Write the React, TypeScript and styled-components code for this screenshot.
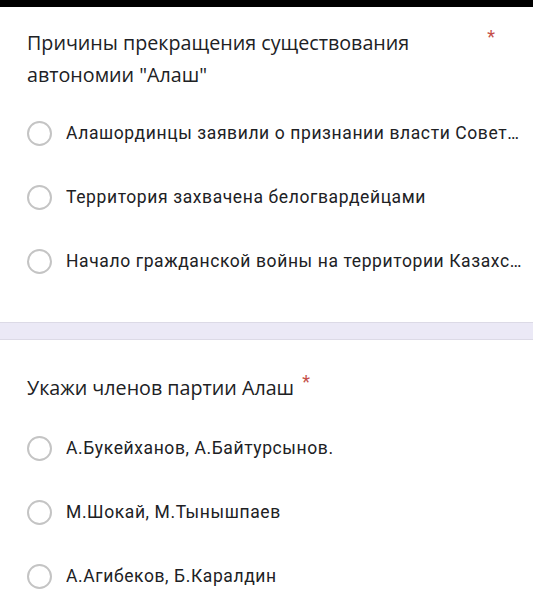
import styled, { createGlobalStyle } from 'styled-components';

const GlobalStyle = createGlobalStyle`
    html, body {
        margin: 0;
        padding: 0;
        background: #ffffff;
    }
`;

const Page = styled.div`
    width: 533px;
    height: 600px;
    overflow: hidden;
    background: #ffffff;
`;
const TopBar = styled.div`
    height: 7px;
    background: #000000;
`;
const Card = styled.div<{ top: number; bottom: number }>`
    padding: ${props => props.top}px 3px ${props => props.bottom}px 27px;
`;
const TitleRow = styled.div<{ spread: boolean }>`
    display: flex;
    align-items: flex-start;
    justify-content: ${props => (props.spread ? 'space-between' : 'flex-start')};
    padding-right: ${props => (props.spread ? '35px' : '0')};
    margin-bottom: ${props => (props.spread ? '10px' : '12px')};
`;
const Title = styled.div`
    font-family: 'Open Sans', 'Noto Sans', sans-serif;
    font-size: 19.7px;
    line-height: 32px;
    color: #202124;
    max-width: 420px;
`;
const Star = styled.span`
    font-family: 'Roboto', sans-serif;
    font-size: 18px;
    line-height: 24px;
    color: #c5504a;
    margin-left: 8px;
    margin-top: -2px;
`;
const Option = styled.label`
    display: flex;
    align-items: center;
    height: 64px;
    gap: 14px;
    min-width: 0;
`;
const Radio = styled.span`
    flex: none;
    width: 21px;
    height: 21px;
    border: 2.5px solid #c4c4c4;
    border-radius: 50%;
`;
const OptionText = styled.span`
    font-family: 'Roboto', sans-serif;
    font-size: 17.5px;
    letter-spacing: 0.6px;
    color: #202124;
    white-space: nowrap;
    overflow: hidden;
    text-overflow: ellipsis;
    min-width: 0;
`;
const Divider = styled.div`
    height: 16px;
    background: #ebe9f6;
    border-top: 1px solid #dcdae6;
    border-bottom: 1px solid #dcdae6;
`;

const questions = [
    {
        title: 'Причины прекращения существования автономии "Алаш"',
        spread: true,
        top: 20,
        bottom: 29,
        options: [
            'Алашординцы заявили о признании власти Совет…',
            'Территория захвачена белогвардейцами',
            'Начало гражданской войны на территории Казахс…',
        ],
    },
    {
        title: 'Укажи членов партии Алаш',
        spread: false,
        top: 32,
        bottom: 0,
        options: ['А.Букейханов, А.Байтурсынов.', 'М.Шокай, М.Тынышпаев', 'А.Агибеков, Б.Каралдин'],
    },
];

function App() {
    return (
        <Page>
            <GlobalStyle />
            <TopBar />
            {questions.map((q, i) => (
                <div key={q.title}>
                    {i > 0 && <Divider />}
                    <Card top={q.top} bottom={q.bottom}>
                        <TitleRow spread={q.spread}>
                            <Title>{q.title}</Title>
                            <Star>*</Star>
                        </TitleRow>
                        {q.options.map(opt => (
                            <Option key={opt}>
                                <Radio />
                                <OptionText>{opt}</OptionText>
                            </Option>
                        ))}
                    </Card>
                </div>
            ))}
        </Page>
    );
}

export default App;
